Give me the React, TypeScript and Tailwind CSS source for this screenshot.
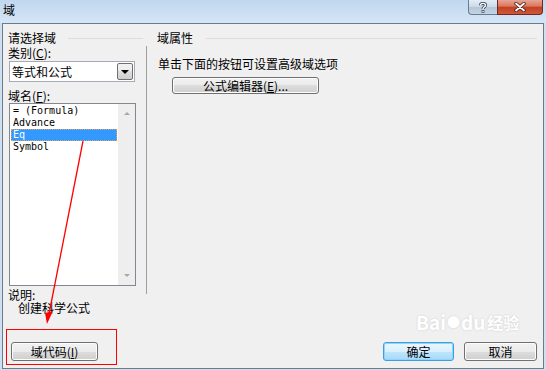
import React from "react";

function Btn({
  children,
  className = "",
  def = false,
}: {
  children: React.ReactNode;
  className?: string;
  def?: boolean;
}) {
  return (
    <div
      className={`flex items-center justify-center rounded-[3px] border text-[12px] leading-none text-black ${
        def
          ? "border-[#3c9ee0] shadow-[inset_0_0_0_1px_#8fd4fa] bg-[linear-gradient(#eaf6fd_0%,#d9f0fc_50%,#bee6fd_50%,#a7d9f5_100%)]"
          : "border-[#707070] shadow-[inset_0_0_0_1px_#fcfcfc] bg-[linear-gradient(#f2f2f2_0%,#ebebeb_50%,#dddddd_50%,#cfcfcf_100%)]"
      } ${className}`}
    >
      {children}
    </div>
  );
}

export default function App() {
  const items = ["= (Formula)", "Advance", "Eq", "Symbol"];
  return (
    <div className="relative w-[546px] h-[370px] overflow-hidden bg-[#cfe0f3] font-['Noto_Sans_CJK_SC','Noto_Sans',sans-serif] text-[12px] text-black">
      {/* title bar */}
      <div className="flex h-[23px] bg-[linear-gradient(#c0d7ef,#d5e6f7)]">
        <div className="ml-[3px] pt-[3px] leading-[14px] text-[12px]">域</div>
        <div className="ml-auto mr-[3px] flex h-[15px]">
          <div className="flex w-[29px] items-center justify-center rounded-bl-[4px] border border-t-0 border-r-0 border-[#6b7c90] bg-[linear-gradient(#e4edf6_0%,#cad9e8_50%,#b4c6d9_51%,#c4d4e4_100%)]">
            <svg width="8" height="11" viewBox="0 0 8 11">
              <path d="M1.5 3.2 C1.5 0.8 6.5 0.8 6.5 3.2 C6.5 5 4 5 4 7" fill="none" stroke="#3a4656" strokeWidth="3" />
              <path d="M1.5 3.2 C1.5 0.8 6.5 0.8 6.5 3.2 C6.5 5 4 5 4 7" fill="none" stroke="#ffffff" strokeWidth="1.4" />
              <rect x="2.6" y="8" width="2.8" height="2.8" fill="#3a4656" />
              <rect x="3.3" y="8.7" width="1.4" height="1.4" fill="#ffffff" />
            </svg>
          </div>
          <div className="flex w-[46px] items-center justify-center rounded-br-[4px] border border-t-0 border-[#6e2a20] bg-[linear-gradient(#e8a493_0%,#d8765f_45%,#c2401f_50%,#d0573a_100%)]">
            <svg width="12" height="10" viewBox="0 0 12 10">
              <path d="M2 1.5 L10 8.5 M10 1.5 L2 8.5" stroke="#3b1a14" strokeWidth="3.4" strokeLinecap="round" />
              <path d="M2 1.5 L10 8.5 M10 1.5 L2 8.5" stroke="#ffffff" strokeWidth="1.8" strokeLinecap="round" />
            </svg>
          </div>
        </div>
      </div>

      {/* client */}
      <div className="ml-[2px] flex h-[346px] w-[542px] flex-col border border-[#6d7a89] bg-[#f0f0f0]">
        <div className="flex">
          {/* left column */}
          <div className="flex w-[143px] flex-col pl-[5px]">
            <div className="mt-[6px] flex h-[16px] items-center">
              <span className="leading-[16px]">请选择域</span>
              <div className="ml-[12px] mr-[3px] h-px flex-1 bg-[#d5dfe5]" />
            </div>
            <div className="h-[14px] leading-[14px]">
              类别(<u>C</u>):
            </div>
            <div className="ml-[1px] mt-[1px] flex h-[21px] w-[126px] items-center border border-[#a5acb5] bg-white">
              <span className="pl-[2px] leading-[14px]">等式和公式</span>
              <div className="ml-auto mr-[1px] flex h-[17px] w-[16px] items-center justify-center rounded-[2px] border border-[#707070] bg-[linear-gradient(#f2f2f2_0%,#ebebeb_50%,#dddddd_50%,#cfcfcf_100%)]">
                <div className="h-0 w-0 border-x-[4px] border-t-[4px] border-x-transparent border-t-black" />
              </div>
            </div>
            <div className="mt-[7px] h-[14px] leading-[14px]">
              域名(<u>F</u>):
            </div>
            <div className="ml-[1px] flex h-[183px] w-[127px] border border-[#828790] bg-white">
              <div className="flex flex-1 flex-col pt-[1px] font-['DejaVu_Sans_Mono',monospace] text-[10px]">
                {items.map((it) => (
                  <div
                    key={it}
                    className={`mx-[1px] h-[12px] pl-[2px] leading-[12px] whitespace-pre ${
                      it === "Eq"
                        ? "bg-[#3399ff] text-white outline-1 outline-dotted outline-[#d9a066] -outline-offset-1"
                        : ""
                    }`}
                  >
                    {it}
                  </div>
                ))}
              </div>
              <div className="flex w-[17px] flex-col items-center justify-between bg-[#eeeeee] py-[8px]">
                <div className="h-0 w-0 border-x-[3px] border-b-[3px] border-x-transparent border-b-[#a8a8a8]" />
                <div className="h-0 w-0 border-x-[3px] border-t-[3px] border-x-transparent border-t-[#a8a8a8]" />
              </div>
            </div>
            <div className="mt-[2px] h-[14px] leading-[14px]">说明:</div>
            <div className="h-[12px] pl-[10px] leading-[12px]">创建科学公式</div>
          </div>

          {/* right column */}
          <div className="flex flex-1 flex-col">
            <div className="mt-[6px] flex h-[16px] items-center pl-[11px] pr-[6px]">
              <span className="leading-[16px]">域属性</span>
              <div className="ml-[13px] h-px flex-1 bg-[#d5dfe5]" />
            </div>
            <div className="flex h-[248px] flex-col border-l border-[#a0a0a0] pl-[11px]">
              <div className="mt-[11px] h-[14px] leading-[14px]">单击下面的按钮可设置高级域选项</div>
              <Btn className="ml-[14px] mt-[6px] h-[17px] w-[147px]">
                公式编辑器(<u>E</u>)...
              </Btn>
            </div>
          </div>
        </div>

        {/* footer */}
        <div className="mt-auto flex pb-[7px]">
          <Btn className="ml-[8px] h-[19px] w-[87px]">
            域代码(<u>I</u>)
          </Btn>
          <Btn def className="ml-auto h-[19px] w-[71px]">
            确定
          </Btn>
          <Btn className="ml-[10px] mr-[6px] h-[19px] w-[73px]">取消</Btn>
        </div>
      </div>

      {/* watermark */}
      <div className="pointer-events-none absolute left-[416px] top-[312px] flex items-center text-[19px] font-bold leading-none text-white [text-shadow:0_0_2px_#c8c8c8]">
        <span>Bai</span>
        <span className="mx-[1px] text-[13px]">●</span>
        <span>du</span>
        <span className="ml-[2px] text-[16px]">经验</span>
      </div>

      {/* red annotation */}
      <div className="pointer-events-none absolute left-[6px] top-[329px] h-[36px] w-[111px] border border-[#ff0000]" />
      <svg className="pointer-events-none absolute left-0 top-0" width="546" height="370">
        <line x1="83" y1="141" x2="49" y2="314" stroke="#ff0000" strokeWidth="1.3" />
        <polygon points="47,324 53,311 45,313" fill="#ff0000" />
      </svg>
    </div>
  );
}
